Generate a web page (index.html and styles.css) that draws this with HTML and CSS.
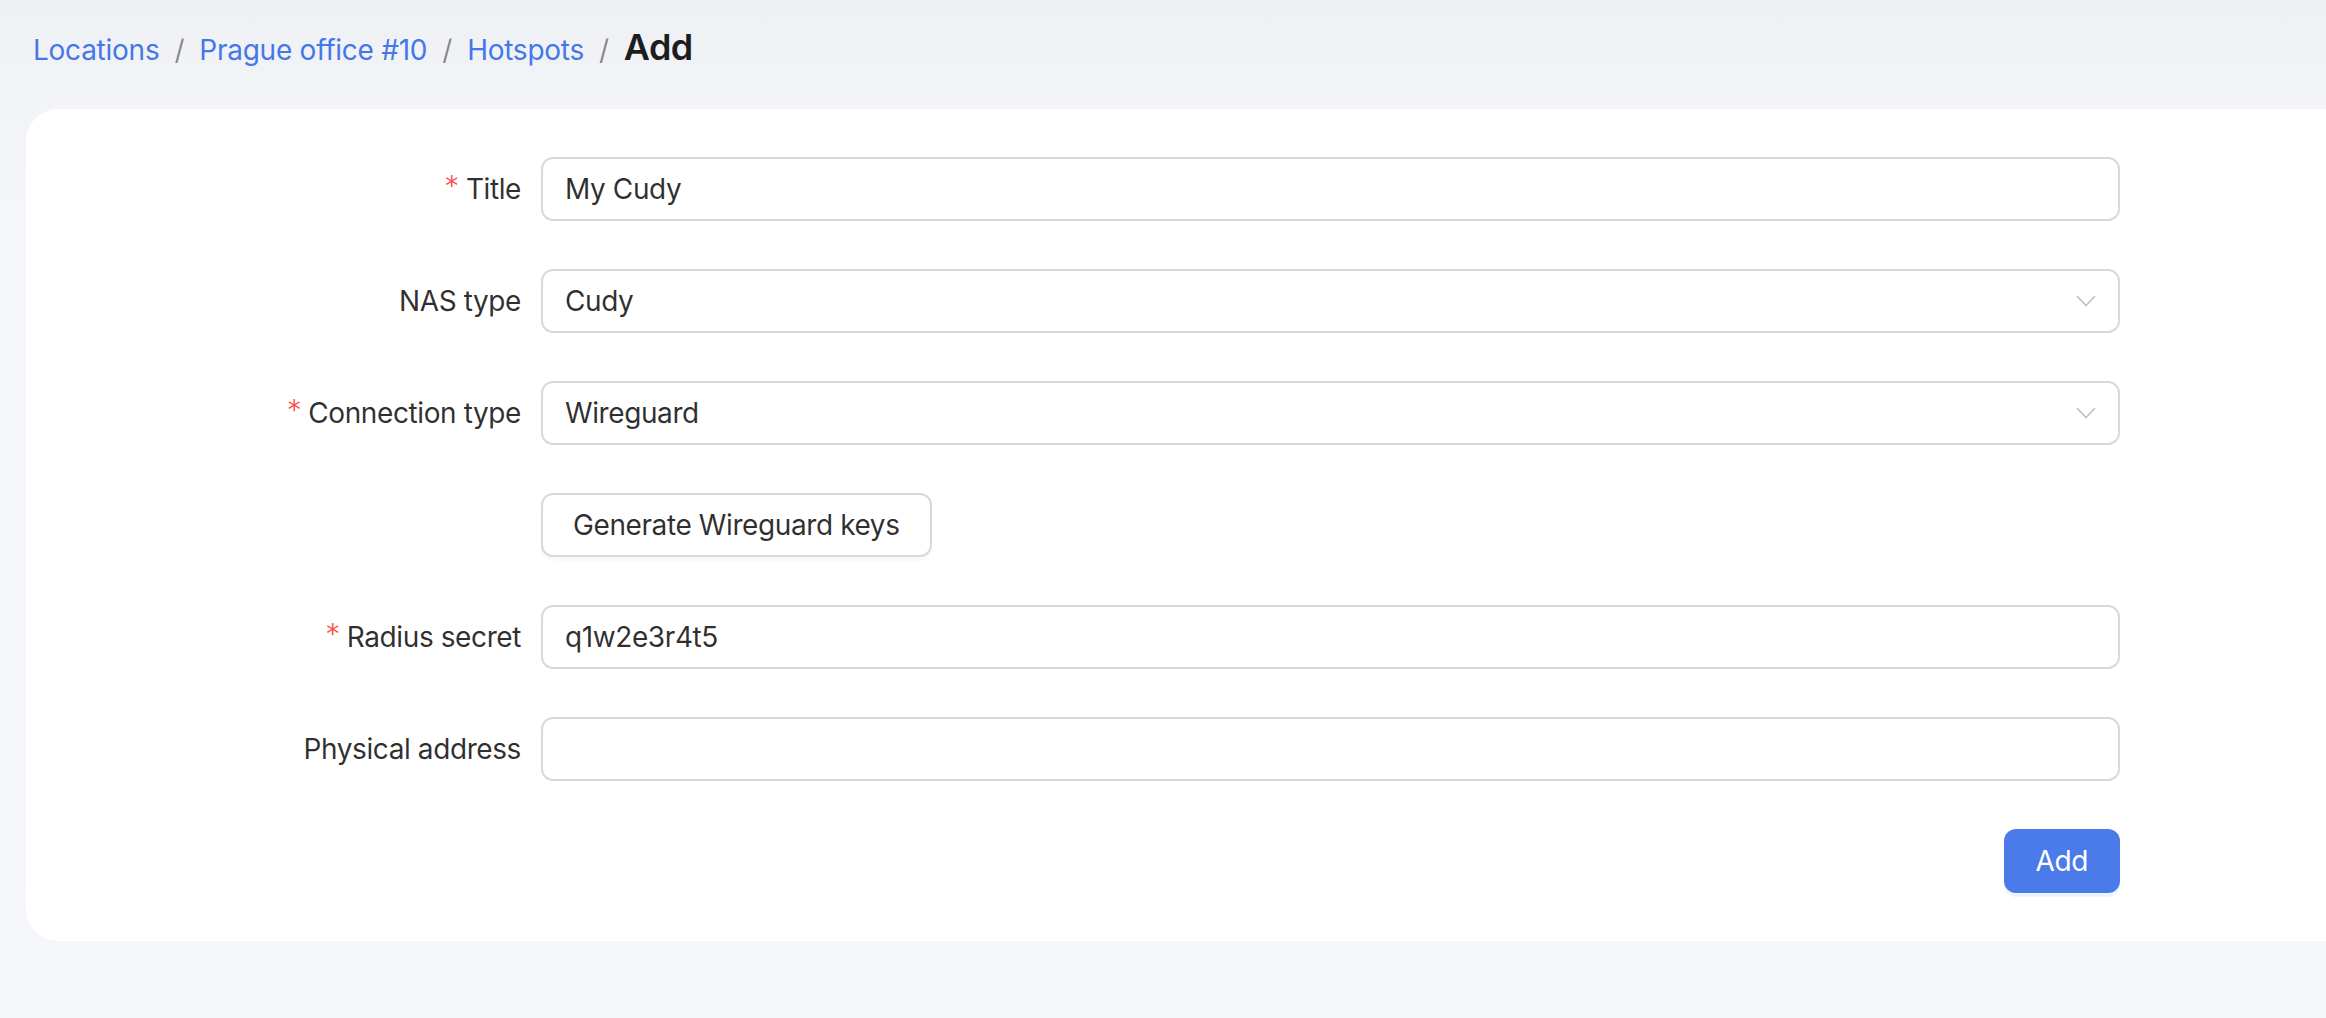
FILE: index.html
```html
<!DOCTYPE html>
<html lang="en">
<head>
<meta charset="utf-8">
<title>Add hotspot</title>
<link rel="stylesheet" href="styles.css">
</head>
<body>
<div class="page">
  <nav class="breadcrumb">
    <a class="crumb-link" href="#">Locations</a>
    <span class="sep">/</span>
    <a class="crumb-link" href="#">Prague office #10</a>
    <span class="sep">/</span>
    <a class="crumb-link" href="#">Hotspots</a>
    <span class="sep">/</span>
    <span class="crumb-current">Add</span>
  </nav>

  <section class="card">
    <form class="form">
      <label class="label"><span class="req">*</span>Title</label>
      <div class="control"><input class="input" type="text" value="My Cudy"></div>

      <label class="label">NAS type</label>
      <div class="control">
        <div class="select">
          <span class="select-value">Cudy</span>
          <svg class="chevron" width="20" height="12" viewBox="0 0 20 12"><path d="M1 1 L10 10.5 L19 1" fill="none" stroke="#c4c4c4" stroke-width="1.8"/></svg>
        </div>
      </div>

      <label class="label"><span class="req">*</span>Connection type</label>
      <div class="control">
        <div class="select">
          <span class="select-value">Wireguard</span>
          <svg class="chevron" width="20" height="12" viewBox="0 0 20 12"><path d="M1 1 L10 10.5 L19 1" fill="none" stroke="#c4c4c4" stroke-width="1.8"/></svg>
        </div>
      </div>

      <div class="label"></div>
      <div class="control"><button type="button" class="btn">Generate Wireguard keys</button></div>

      <label class="label"><span class="req">*</span>Radius secret</label>
      <div class="control"><input class="input" type="text" value="q1w2e3r4t5"></div>

      <label class="label">Physical address</label>
      <div class="control"><input class="input" type="text" value=""></div>

      <div class="label"></div>
      <div class="control control-end"><button type="button" class="btn btn-primary">Add</button></div>
    </form>
  </section>
</div>
</body>
</html>
```

FILE: styles.css
```css
* { box-sizing: border-box; }

html, body {
  margin: 0;
  height: 100%;
}

body {
  font-family: Inter, "Noto Sans", "Liberation Sans", sans-serif;
  background: linear-gradient(180deg, #eff0f4 0px, #f3f4f8 110px, #f5f6fa 200px, #f5f7fb 100%);
  color: rgba(0, 0, 0, 0.88);
  overflow: hidden;
  letter-spacing: -0.4px;
}

.page {
  padding-left: 26px;
}

.breadcrumb {
  display: flex;
  align-items: baseline;
  padding: 23px 0 0 7px;
  height: 71px;
  line-height: 48px;
  font-size: 28px;
  letter-spacing: -0.25px;
}

.crumb-link {
  color: #4478e9;
  text-decoration: none;
}

.sep {
  color: rgba(0, 0, 0, 0.45);
  margin: 0 15px;
}

.crumb-current {
  font-size: 36px;
  font-weight: 600;
  color: #1c1d1f;
  letter-spacing: -0.6px;
}

.card {
  margin-top: 38px;
  background: #ffffff;
  border-radius: 32px 0 0 32px;
  padding: 48px 0 48px 48px;
}

.form {
  display: grid;
  grid-template-columns: 467px 1579px;
  grid-auto-rows: 64px;
  row-gap: 48px;
}

.label {
  display: flex;
  align-items: center;
  justify-content: flex-end;
  padding-right: 20px;
  font-size: 28px;
  color: rgba(0, 0, 0, 0.82);
  white-space: nowrap;
}

.req {
  color: #ff4d4f;
  font-size: 26px;
  margin-right: 8px;
  position: relative;
  top: -3px;
  font-family: "DejaVu Sans", sans-serif;
}

.control {
  display: flex;
  align-items: center;
}

.control-end {
  justify-content: flex-end;
}

.input,
.select {
  width: 100%;
  height: 64px;
  border: 2px solid #d9d9d9;
  border-radius: 12px;
  padding: 0 22px;
  font-family: inherit;
  font-size: 28px;
  letter-spacing: -0.4px;
  color: rgba(0, 0, 0, 0.82);
  background: #ffffff;
  outline: none;
}

.select {
  display: flex;
  align-items: center;
  justify-content: space-between;
}

.chevron {
  display: block;
}

.btn {
  height: 64px;
  padding: 0 30px;
  border: 2px solid #d9d9d9;
  border-radius: 12px;
  background: #ffffff;
  font-family: inherit;
  font-size: 28px;
  letter-spacing: -0.4px;
  color: rgba(0, 0, 0, 0.82);
  box-shadow: 0 4px 0 rgba(0, 0, 0, 0.02);
  cursor: pointer;
}

.btn-primary {
  background: #4a7be9;
  border-color: #4a7be9;
  color: #ffffff;
  box-shadow: 0 4px 0 rgba(5, 145, 255, 0.08);
}
```
